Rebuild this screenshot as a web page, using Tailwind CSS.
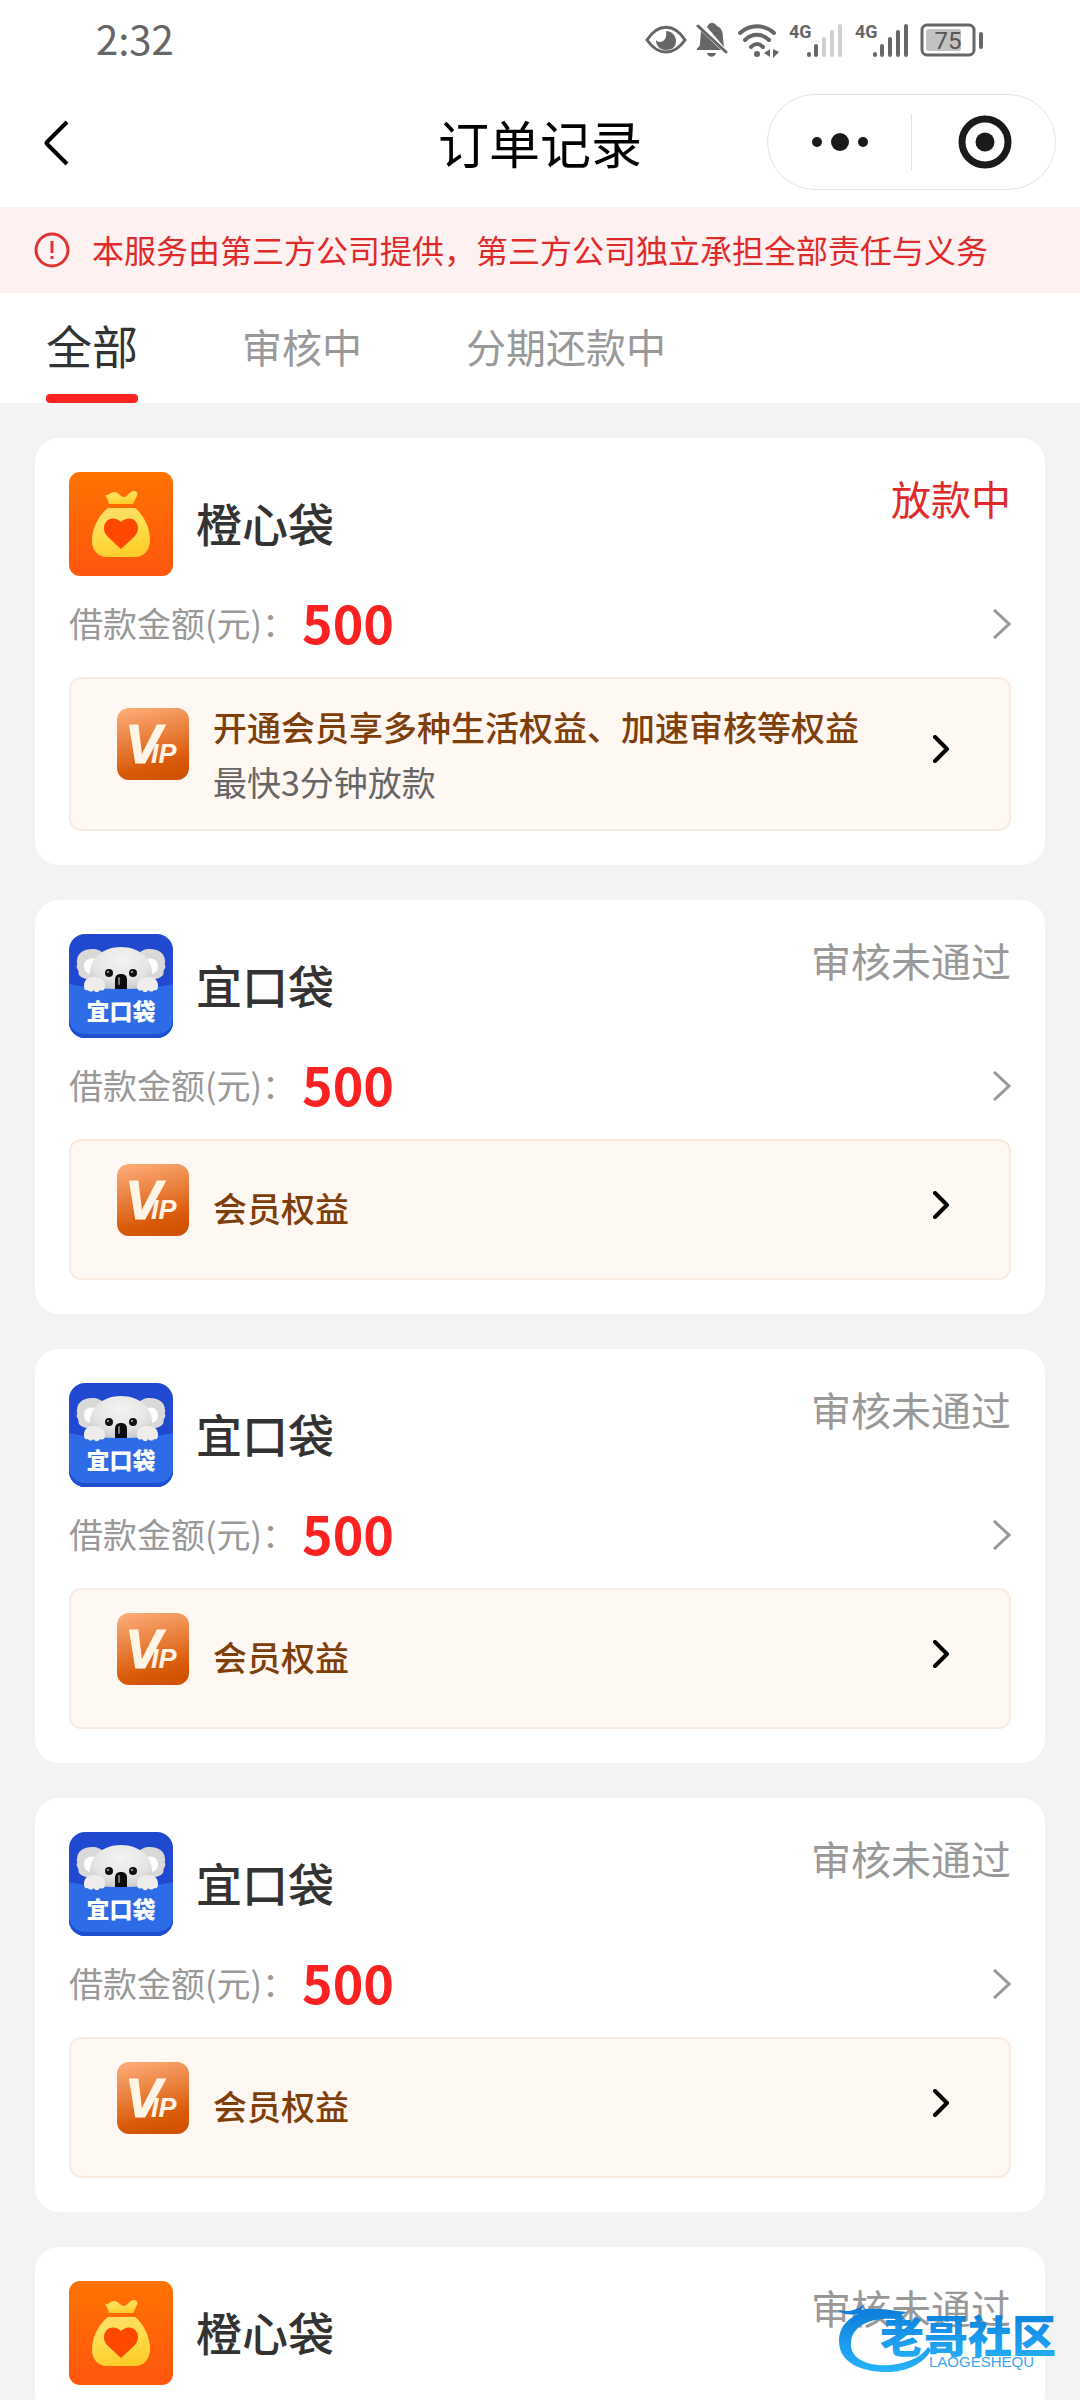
<!DOCTYPE html>
<html lang="zh-CN">
<head>
    <meta charset="UTF-8">
    <meta name="viewport" content="width=device-width, initial-scale=1.0">
    <title>订单记录</title>
    <script src="https://cdn.jsdelivr.net/npm/@tailwindcss/browser@4"></script>
</head>
<body class="bg-[#f3f3f3] font-['Noto_Sans_CJK_SC',sans-serif] text-[#333333]">

    <!-- Shared icons -->
    <svg class="absolute w-0 h-0" aria-hidden="true">
        <defs>
            <linearGradient id="orange-bg" x1="0" y1="0" x2="0" y2="1">
                <stop offset="0" stop-color="#ff7300"/>
                <stop offset="1" stop-color="#ff560f"/>
            </linearGradient>
            <linearGradient id="bag-fill" x1="0" y1="0" x2="0.3" y2="1">
                <stop offset="0" stop-color="#ffdc6a"/>
                <stop offset="0.5" stop-color="#ffdf50"/>
                <stop offset="1" stop-color="#ffce2b"/>
            </linearGradient>
            <linearGradient id="vip-bg" x1="0.3" y1="0" x2="0.55" y2="1">
                <stop offset="0" stop-color="#fba873"/>
                <stop offset="0.8" stop-color="#d95b0a"/>
                <stop offset="1" stop-color="#d15200"/>
            </linearGradient>
            <radialGradient id="koala-head" cx="0.5" cy="0.3" r="0.75">
                <stop offset="0" stop-color="#f4f3f2"/>
                <stop offset="0.6" stop-color="#e6e5e4"/>
                <stop offset="1" stop-color="#c6c5c6"/>
            </radialGradient>
            <linearGradient id="mark-fill" x1="0" y1="0" x2="0" y2="1">
                <stop offset="0" stop-color="#0a78d8"/>
                <stop offset="1" stop-color="#28b4fa"/>
            </linearGradient>
            <clipPath id="koala-clip"><rect width="104" height="104" rx="16"/></clipPath>
        </defs>
        <symbol id="icon-bag" viewBox="0 0 104 104">
            <rect width="104" height="104" rx="11" fill="url(#orange-bg)"/>
            <path d="M36 23c4 1 5-3 9-3 5 0 6 5 10 5s5-6 10-6c3 0 4 3 3 5l-4 8H40c-1-4-2-6-4-9z" fill="url(#bag-fill)"/>
            <path d="M39 36h27c8 6 15 19 15 32 0 10-6 17-15 17H38c-9 0-15-7-15-16 0-14 7-26 16-33z" fill="url(#bag-fill)"/>
            <path d="M52 77 39 65c-5-5-5-11-2-15 4-5 11-4 15 0 4-4 11-5 15 0 3 4 3 10-2 15z" fill="#ff4800"/>
        </symbol>
        <symbol id="icon-koala" viewBox="0 0 104 104">
            <g clip-path="url(#koala-clip)">
                <rect width="104" height="104" fill="#2149cf"/>
                <path d="M8 27c0-8 7-12 15-12 6 0 9 2 12 5L28 46c-8 0-15-1-18-5-1-2 0-3-1-5s-2-3-1-5-1-2 0-4z" fill="#dad9d9"/>
                <path d="M96 27c0-8-7-12-15-12-6 0-9 2-12 5l7 26c8 0 15-1 18-5 1-2 0-3 1-5s2-3 1-5 1-2 0-4z" fill="#dad9d9"/>
                <path d="M15 32c0-6 5-9 12-7l-4 15c-5 0-8-3-8-8zM89 32c0-6-5-9-12-7l4 15c5 0 8-3 8-8z" fill="#fffdfb"/>
                <path d="M52 13c18 0 30 11 31 25 0 7-2 12-5 18H26c-3-6-5-11-5-18 1-14 13-25 31-25z" fill="url(#koala-head)"/>
                <circle cx="40" cy="39" r="4" fill="#111111"/>
                <circle cx="64" cy="39" r="4" fill="#111111"/>
                <circle cx="39" cy="38" r="1" fill="#bbbbbb"/>
                <circle cx="63" cy="38" r="1" fill="#bbbbbb"/>
                <path d="M0 50c17 4 34 5 52 5s35-1 52-5v54H0z" fill="#2e6be6"/>
                <path d="M46 55v-9c0-4 2-6 6-6s6 2 6 6v9z" fill="#0d0d0d"/>
                <path d="M50 44v6" stroke="#777777" stroke-width="2" stroke-linecap="round"/>
                <path d="M15 52c0-7 5-9 10-9 7 0 11 3 11 9 0 5-3 5-5 4-2 3-5 3-6 0-2 2-5 2-6 0-3 1-4-1-4-4z" fill="#eeedec"/>
                <path d="M89 52c0-7-5-9-10-9-7 0-11 3-11 9 0 5 3 5 5 4 2 3 5 3 6 0 2 2 5 2 6 0 3 1 4-1 4-4z" fill="#eeedec"/>
                <path d="M0 86c2 10 8 14 18 14h68c10 0 16-4 18-14v18H0z" fill="#1d4fcf"/>
                <text x="52" y="86" text-anchor="middle" font-size="23" font-weight="900" fill="#ffffff">宜口袋</text>
            </g>
        </symbol>
        <symbol id="icon-vip" viewBox="0 0 72 72">
            <rect width="72" height="72" rx="12" fill="url(#vip-bg)"/>
            <text x="8" y="55" font-family="Liberation Sans" font-size="55" font-weight="700" font-style="italic" fill="#fff5e6" stroke="#fff5e6" stroke-width="1">V</text>
            <text x="34" y="55" font-family="Liberation Sans" font-size="27" font-weight="700" font-style="italic" fill="#fff5e6">IP</text>
        </symbol>
        <symbol id="icon-more" viewBox="0 0 18 30">
            <path d="M1 1l15 14L1 29" fill="none" stroke="#999999" stroke-width="3"/>
        </symbol>
        <symbol id="icon-go" viewBox="0 0 18 28">
            <path d="M3 2l12 12L3 26" fill="none" stroke="#000000" stroke-width="4" stroke-linecap="round" stroke-linejoin="round"/>
        </symbol>
    </svg>

    <div class="relative h-screen flex flex-col overflow-hidden">

        <!-- Status bar -->
        <div class="bg-white h-20 shrink-0 pl-24 pr-24 flex items-center justify-between text-[#666666]">
            <span class="pb-1 text-[40px] leading-[56px]">2:32</span>
            <div class="flex items-center gap-[9px]">
                <svg class="w-[42px] h-9" viewBox="0 0 42 36">
                    <path d="M2 18C13 1 29 1 40 18 29 34 13 34 2 18z" fill="none" stroke="#666666" stroke-width="3"/>
                    <path d="M21 9c5 0 10 4 10 10s-4 9-10 9-10-4-10-10c3 4 12 2 10-9z" fill="#666666"/>
                </svg>
                <svg class="w-8 h-9" viewBox="0 0 32 36">
                    <path d="M11 5c1-2 2-4 5-4s4 2 5 3c5 2 6 7 6 12l1 9zM5 9l20 19H1c-1-2 3-3 3-6zM11 31h9c-1 5-8 5-9 0z" fill="#666666"/>
                    <path d="M2 4l28 26" stroke="#666666" stroke-width="3" stroke-linecap="round"/>
                </svg>
                <svg class="w-[42px] h-9" viewBox="0 0 42 36">
                    <path d="M3 11c10-9 24-9 34 0M8 18c7-7 17-7 24 0M14 25c4-4 8-4 12 0" fill="none" stroke="#666666" stroke-width="4" stroke-linecap="round"/>
                    <circle cx="20" cy="32" r="3" fill="#666666"/>
                    <path d="M33 27v8l-6-4zM36 27l6 3-6 6z" fill="#666666"/>
                </svg>
                <svg class="w-[57px] h-9" viewBox="0 0 57 36">
                    <text x="1" y="16" font-family="Roboto" font-size="18" font-weight="700" fill="#666666">4G</text>
                    <path d="M21 32v1M28 24v9" stroke="#666666" stroke-width="4" stroke-linecap="round"/>
                    <path d="M36 17v16M44 10v23M52 4v29" stroke="#cfcfcf" stroke-width="4" stroke-linecap="round"/>
                </svg>
                <svg class="w-[57px] h-9" viewBox="0 0 57 36">
                    <text x="1" y="16" font-family="Roboto" font-size="18" font-weight="700" fill="#666666">4G</text>
                    <path d="M21 32v1M28 24v9M36 17v16M44 10v23M52 4v29" stroke="#666666" stroke-width="4" stroke-linecap="round"/>
                </svg>
                <svg class="w-16 h-9" viewBox="0 0 64 36">
                    <rect x="2" y="3" width="52" height="30" rx="5" fill="none" stroke="#666666" stroke-width="3"/>
                    <rect x="6" y="7" width="35" height="22" rx="3" fill="#c2c2c2"/>
                    <path d="M61 12v13" stroke="#666666" stroke-width="4" stroke-linecap="round"/>
                    <text x="28" y="27" text-anchor="middle" font-family="Roboto" font-size="24" fill="#555555">75</text>
                </svg>
            </div>
        </div>

        <!-- Nav bar -->
        <header class="bg-white h-[127px] shrink-0 px-6 grid grid-cols-[1fr_auto_1fr] items-center">
            <button type="button" aria-label="返回" class="justify-self-start ml-[18px]">
                <svg class="w-8 h-12" viewBox="0 0 32 48">
                    <path d="M25 2L5 22q-1 1 0 2l20 20" fill="none" stroke="#000000" stroke-width="4"/>
                </svg>
            </button>
            <h1 class="pb-1 text-[51px] leading-[72px] text-black">订单记录</h1>
            <div class="justify-self-end w-[289px] h-24 mb-1 flex items-center rounded-full border border-[#e4e4e4]">
                <button type="button" aria-label="更多" class="flex-1 flex justify-center">
                    <svg class="w-14 h-14" viewBox="0 0 56 56">
                        <circle cx="5" cy="28" r="5" fill="#1a1a1a"/>
                        <circle cx="28" cy="28" r="9" fill="#1a1a1a"/>
                        <circle cx="51" cy="28" r="5" fill="#1a1a1a"/>
                    </svg>
                </button>
                <span class="w-px h-14 bg-[#e4e4e4]"></span>
                <button type="button" aria-label="关闭" class="flex-1 flex justify-center">
                    <svg class="w-14 h-14" viewBox="0 0 56 56">
                        <circle cx="29" cy="28" r="23" fill="none" stroke="#1a1a1a" stroke-width="7"/>
                        <circle cx="29" cy="28" r="9.5" fill="#1a1a1a"/>
                    </svg>
                </button>
            </div>
        </header>

        <!-- Notice -->
        <div class="bg-[#fdf1f1] h-[86px] shrink-0 px-[34px] flex items-center gap-[22px]">
            <svg class="w-9 h-9 shrink-0" viewBox="0 0 36 36">
                <circle cx="18" cy="18" r="16" fill="none" stroke="#e03434" stroke-width="3"/>
                <path d="M18 9v12M18 24v3" stroke="#e03434" stroke-width="3"/>
            </svg>
            <p class="pb-0.5 text-[32px] leading-[48px] text-[#e02a2a]">本服务由第三方公司提供，第三方公司独立承担全部责任与义务</p>
        </div>

        <!-- Tabs -->
        <nav class="bg-white h-[110px] shrink-0 px-[46px] flex gap-[104px] text-[40px] text-[#999999]">
            <button type="button" class="relative pb-2 text-[46px] text-[#333333]">
                全部
                <span class="absolute inset-x-0 bottom-0 h-[9px] rounded bg-[#fc2222]"></span>
            </button>
            <button type="button" class="pb-1">审核中</button>
            <button type="button" class="pb-1">分期还款中</button>
        </nav>

        <!-- Orders -->
        <main class="flex-1 min-h-0 overflow-y-auto [scrollbar-width:none] px-[35px] py-[35px] flex flex-col gap-[35px]">

            <article class="shrink-0 bg-white rounded-3xl p-[34px]">
                <div class="flex items-start gap-[23px]">
                    <svg class="w-[104px] h-[104px]"><use href="#icon-bag"/></svg>
                    <h2 class="flex-1 text-[46px] leading-[100px] font-medium">橙心袋</h2>
                    <span class="text-[40px] leading-[52px] text-[#e02a2a]">放款中</span>
                </div>
                <div class="h-24 mb-[5px] flex items-center justify-between">
                    <p class="pb-1 flex items-center gap-1.5 text-[34px] text-[#999999]">
                        借款金额(元)：
                        <strong class="text-[52px] leading-[72px] font-bold text-[#fc2222]">500</strong>
                    </p>
                    <svg class="w-[18px] h-[30px]"><use href="#icon-more"/></svg>
                </div>
                <a href="#" class="min-h-[141px] pl-[46px] pr-[59px] py-5 flex items-center gap-6 rounded-xl border-2 border-[#f9ebe0] bg-[#fff7f1]">
                    <svg class="w-[72px] h-[72px] mb-5"><use href="#icon-vip"/></svg>
                    <div class="flex-1 text-[34px] leading-[55px]">
                        <p class="font-medium text-[#7f3f0b]">开通会员享多种生活权益、加速审核等权益</p>
                        <p class="text-[#666666]">最快3分钟放款</p>
                    </div>
                    <svg class="w-[18px] h-7 mb-[10px]"><use href="#icon-go"/></svg>
                </a>
            </article>

            <article class="shrink-0 bg-white rounded-3xl p-[34px]">
                <div class="flex items-start gap-[23px]">
                    <svg class="w-[104px] h-[104px]"><use href="#icon-koala"/></svg>
                    <h2 class="flex-1 text-[46px] leading-[100px] font-medium">宜口袋</h2>
                    <span class="text-[40px] leading-[52px] text-[#999999]">审核未通过</span>
                </div>
                <div class="h-24 mb-[5px] flex items-center justify-between">
                    <p class="pb-1 flex items-center gap-1.5 text-[34px] text-[#999999]">
                        借款金额(元)：
                        <strong class="text-[52px] leading-[72px] font-bold text-[#fc2222]">500</strong>
                    </p>
                    <svg class="w-[18px] h-[30px]"><use href="#icon-more"/></svg>
                </div>
                <a href="#" class="min-h-[141px] pl-[46px] pr-[59px] py-5 flex items-center gap-6 rounded-xl border-2 border-[#f9ebe0] bg-[#fff7f1]">
                    <svg class="w-[72px] h-[72px] mb-5"><use href="#icon-vip"/></svg>
                    <p class="flex-1 pb-1 text-[34px] leading-[55px] font-medium text-[#7f3f0b]">会员权益</p>
                    <svg class="w-[18px] h-7 mb-[10px]"><use href="#icon-go"/></svg>
                </a>
            </article>

            <article class="shrink-0 bg-white rounded-3xl p-[34px]">
                <div class="flex items-start gap-[23px]">
                    <svg class="w-[104px] h-[104px]"><use href="#icon-koala"/></svg>
                    <h2 class="flex-1 text-[46px] leading-[100px] font-medium">宜口袋</h2>
                    <span class="text-[40px] leading-[52px] text-[#999999]">审核未通过</span>
                </div>
                <div class="h-24 mb-[5px] flex items-center justify-between">
                    <p class="pb-1 flex items-center gap-1.5 text-[34px] text-[#999999]">
                        借款金额(元)：
                        <strong class="text-[52px] leading-[72px] font-bold text-[#fc2222]">500</strong>
                    </p>
                    <svg class="w-[18px] h-[30px]"><use href="#icon-more"/></svg>
                </div>
                <a href="#" class="min-h-[141px] pl-[46px] pr-[59px] py-5 flex items-center gap-6 rounded-xl border-2 border-[#f9ebe0] bg-[#fff7f1]">
                    <svg class="w-[72px] h-[72px] mb-5"><use href="#icon-vip"/></svg>
                    <p class="flex-1 pb-1 text-[34px] leading-[55px] font-medium text-[#7f3f0b]">会员权益</p>
                    <svg class="w-[18px] h-7 mb-[10px]"><use href="#icon-go"/></svg>
                </a>
            </article>

            <article class="shrink-0 bg-white rounded-3xl p-[34px]">
                <div class="flex items-start gap-[23px]">
                    <svg class="w-[104px] h-[104px]"><use href="#icon-koala"/></svg>
                    <h2 class="flex-1 text-[46px] leading-[100px] font-medium">宜口袋</h2>
                    <span class="text-[40px] leading-[52px] text-[#999999]">审核未通过</span>
                </div>
                <div class="h-24 mb-[5px] flex items-center justify-between">
                    <p class="pb-1 flex items-center gap-1.5 text-[34px] text-[#999999]">
                        借款金额(元)：
                        <strong class="text-[52px] leading-[72px] font-bold text-[#fc2222]">500</strong>
                    </p>
                    <svg class="w-[18px] h-[30px]"><use href="#icon-more"/></svg>
                </div>
                <a href="#" class="min-h-[141px] pl-[46px] pr-[59px] py-5 flex items-center gap-6 rounded-xl border-2 border-[#f9ebe0] bg-[#fff7f1]">
                    <svg class="w-[72px] h-[72px] mb-5"><use href="#icon-vip"/></svg>
                    <p class="flex-1 pb-1 text-[34px] leading-[55px] font-medium text-[#7f3f0b]">会员权益</p>
                    <svg class="w-[18px] h-7 mb-[10px]"><use href="#icon-go"/></svg>
                </a>
            </article>

            <article class="shrink-0 bg-white rounded-3xl p-[34px]">
                <div class="flex items-start gap-[23px]">
                    <svg class="w-[104px] h-[104px]"><use href="#icon-bag"/></svg>
                    <h2 class="flex-1 text-[46px] leading-[100px] font-medium">橙心袋</h2>
                    <span class="text-[40px] leading-[52px] text-[#999999]">审核未通过</span>
                </div>
            </article>
        </main>

        <!-- Community watermark -->
        <svg class="absolute right-4 bottom-6 w-[228px] h-[76px]" viewBox="0 0 228 76">
            <path d="M2 10c12 3 20-1 27-6l-4 6c12-3 27 0 46 2l-6 3 5 5c-28-4-53 2-55 22-2 18 20 25 40 23 17-2 31-8 37-18l3 3c-7 14-25 22-44 22C24 72 3 62 3 41 3 28 10 20 22 14 14 15 7 15 2 10z" fill="url(#mark-fill)"/>
            <text x="44" y="53" font-size="44" font-weight="900" fill="url(#mark-fill)">老哥社区</text>
            <text x="93" y="67" font-family="Liberation Sans" font-size="15" fill="#3aa5ee">LAOGESHEQU</text>
        </svg>
    </div>
</body>
</html>
